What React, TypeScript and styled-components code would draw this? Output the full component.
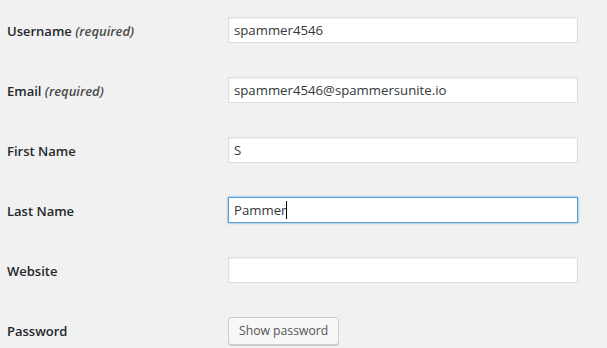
import styled, { createGlobalStyle } from "styled-components";

const GlobalStyle = createGlobalStyle`
  html, body {
    margin: 0;
    padding: 0;
    background: #f1f1f1;
  }
  body {
    font-family: "Open Sans", "Noto Sans", sans-serif;
    font-size: 13px;
    color: #444;
  }
`

const Form = styled.form`
  padding-top: 2px;
  display: flex;
  flex-direction: column;
`

const Row = styled.div`
  display: grid;
  grid-template-columns: 228px 350px;
  height: 60px;
`

const Label = styled.label`
  padding: 20px 0 0 7px;
  font-weight: 600;
  font-size: 13px;
  line-height: 18px;
  color: #23282d;
`

const Note = styled.span`
  font-style: italic;
  color: #4a4a4a;
`

const Cell = styled.div`
  padding-top: 15px;
`

const Field = styled.div<{ $focused?: boolean }>`
  box-sizing: border-box;
  width: 350px;
  height: 26px;
  padding: 0 5px;
  display: flex;
  align-items: center;
  background: #fff;
  border: 1px solid ${p => (p.$focused ? "#5b9dd9" : "#ddd")};
  box-shadow: ${p =>
    p.$focused
      ? "0 0 2px rgba(30, 140, 190, 0.8)"
      : "inset 0 1px 2px rgba(0, 0, 0, 0.07)"};
  font-size: 13.2px;
  color: #32373c;
  white-space: pre;
`

const Caret = styled.span`
  display: inline-block;
  width: 1px;
  height: 18px;
  background: #000;
`

const Button = styled.button`
  box-sizing: border-box;
  height: 28px;
  padding: 0 10px 1px;
  background: #f7f7f7;
  border: 1px solid #ccc;
  border-radius: 3px;
  box-shadow: 0 1px 0 #ccc;
  color: #555;
  font-family: "Open Sans", "Noto Sans", sans-serif;
  font-size: 12.2px;
  cursor: pointer;
`

type IField = {
  label: string
  required?: boolean
  value: string
  focused?: boolean
}

const fields: IField[] = [
  { label: "Username", required: true, value: "spammer4546" },
  { label: "Email", required: true, value: "spammer4546@spammersunite.io" },
  { label: "First Name", value: "S" },
  { label: "Last Name", value: "Pammer", focused: true },
  { label: "Website", value: "" },
]

function App() {
  return (
    <>
      <GlobalStyle />
      <Form>
        {fields.map((f, key) => (
          <Row key={key}>
            <Label>
              {f.label} {f.required && <Note>(required)</Note>}
            </Label>
            <Cell>
              <Field $focused={f.focused}>
                {f.value}
                {f.focused && <Caret />}
              </Field>
            </Cell>
          </Row>
        ))}
        <Row>
          <Label>Password</Label>
          <Cell>
            <Button type="button">Show password</Button>
          </Cell>
        </Row>
      </Form>
    </>
  )
}

export default App
